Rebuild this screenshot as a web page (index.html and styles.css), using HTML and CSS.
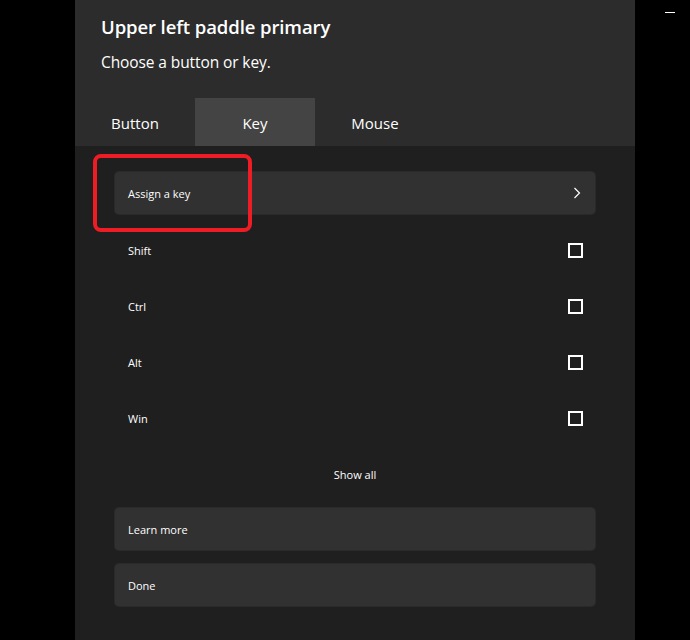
FILE: index.html
```html
<!DOCTYPE html>
<html>
<head>
<meta charset="utf-8">
<link rel="stylesheet" href="styles.css">
</head>
<body>
<div class="screen">
  <div class="panel">
    <header class="head">
      <h1 class="title">Upper left paddle primary</h1>
      <p class="subtitle">Choose a button or key.</p>
      <nav class="tabs">
        <div class="tab">Button</div>
        <div class="tab active">Key</div>
        <div class="tab">Mouse</div>
      </nav>
    </header>
    <main class="body">
      <div class="btn assign">
        <span>Assign a key</span>
        <svg class="chev" width="8" height="12" viewBox="0 0 8 12"><path d="M1.5 1 L6.5 6 L1.5 11" fill="none" stroke="#fff" stroke-width="1.2"/></svg>
      </div>
      <div class="check-row"><span>Shift</span><span class="box"></span></div>
      <div class="check-row"><span>Ctrl</span><span class="box"></span></div>
      <div class="check-row"><span>Alt</span><span class="box"></span></div>
      <div class="check-row"><span>Win</span><span class="box"></span></div>
      <div class="show-all">Show all</div>
      <div class="btn learn">Learn more</div>
      <div class="btn done">Done</div>
    </main>
    <div class="highlight"></div>
  </div>
  <div class="minimize"></div>
</div>
</body>
</html>
```
FILE: styles.css
```css
* { box-sizing: border-box; }
html, body { margin: 0; padding: 0; background: #000; }
body { font-family: "Open Sans", "Noto Sans", sans-serif; color: #fff; }
.screen { position: relative; width: 690px; height: 640px; overflow: hidden; background: #000; }
.panel { position: relative; margin-left: 75px; width: 560px; height: 640px; background: #1f1f1f; display: flex; flex-direction: column; }
.head { background: #2c2c2c; height: 146px; display: flex; flex-direction: column; }
.title { margin: 0; padding: 13px 0 0 26px; font-size: 18.5px; font-weight: 600; line-height: 28px; letter-spacing: -0.1px; }
.subtitle { margin: 0; padding: 11px 0 0 26px; font-size: 15.5px; line-height: 20px; letter-spacing: -0.1px; }
.tabs { margin-top: auto; display: flex; height: 48px; }
.tab { width: 120px; display: flex; align-items: center; justify-content: center; font-size: 15px; padding-top: 2px; }
.tab.active { background: #444444; }
.body { display: flex; flex-direction: column; padding: 26px 40px 0; }
.btn { height: 42px; background: #313131; border-radius: 4px; display: flex; align-items: center; justify-content: space-between; padding: 0 13px; font-size: 11px; box-shadow: 0 0 0 1px #2a2a2a; }
.chev { margin-right: 1px; }
.check-row { height: 56px; display: flex; align-items: center; justify-content: space-between; padding: 0 13px; font-size: 11px; }
.assign { margin-bottom: 8px; }
.box { width: 15px; height: 15px; border: 2px solid #fff; margin-right: -1px; }
.show-all { height: 56px; display: flex; align-items: center; justify-content: center; font-size: 11px; padding-left: 0; }
.learn { margin-top: 6px; }
.done { margin-top: 14px; }
.highlight { position: absolute; left: 18px; top: 154px; width: 159px; height: 78px; border: 4px solid #ee1c25; border-radius: 8px; }
.minimize { position: absolute; left: 665px; top: 12px; width: 10px; height: 1px; background: #fff; }
```
